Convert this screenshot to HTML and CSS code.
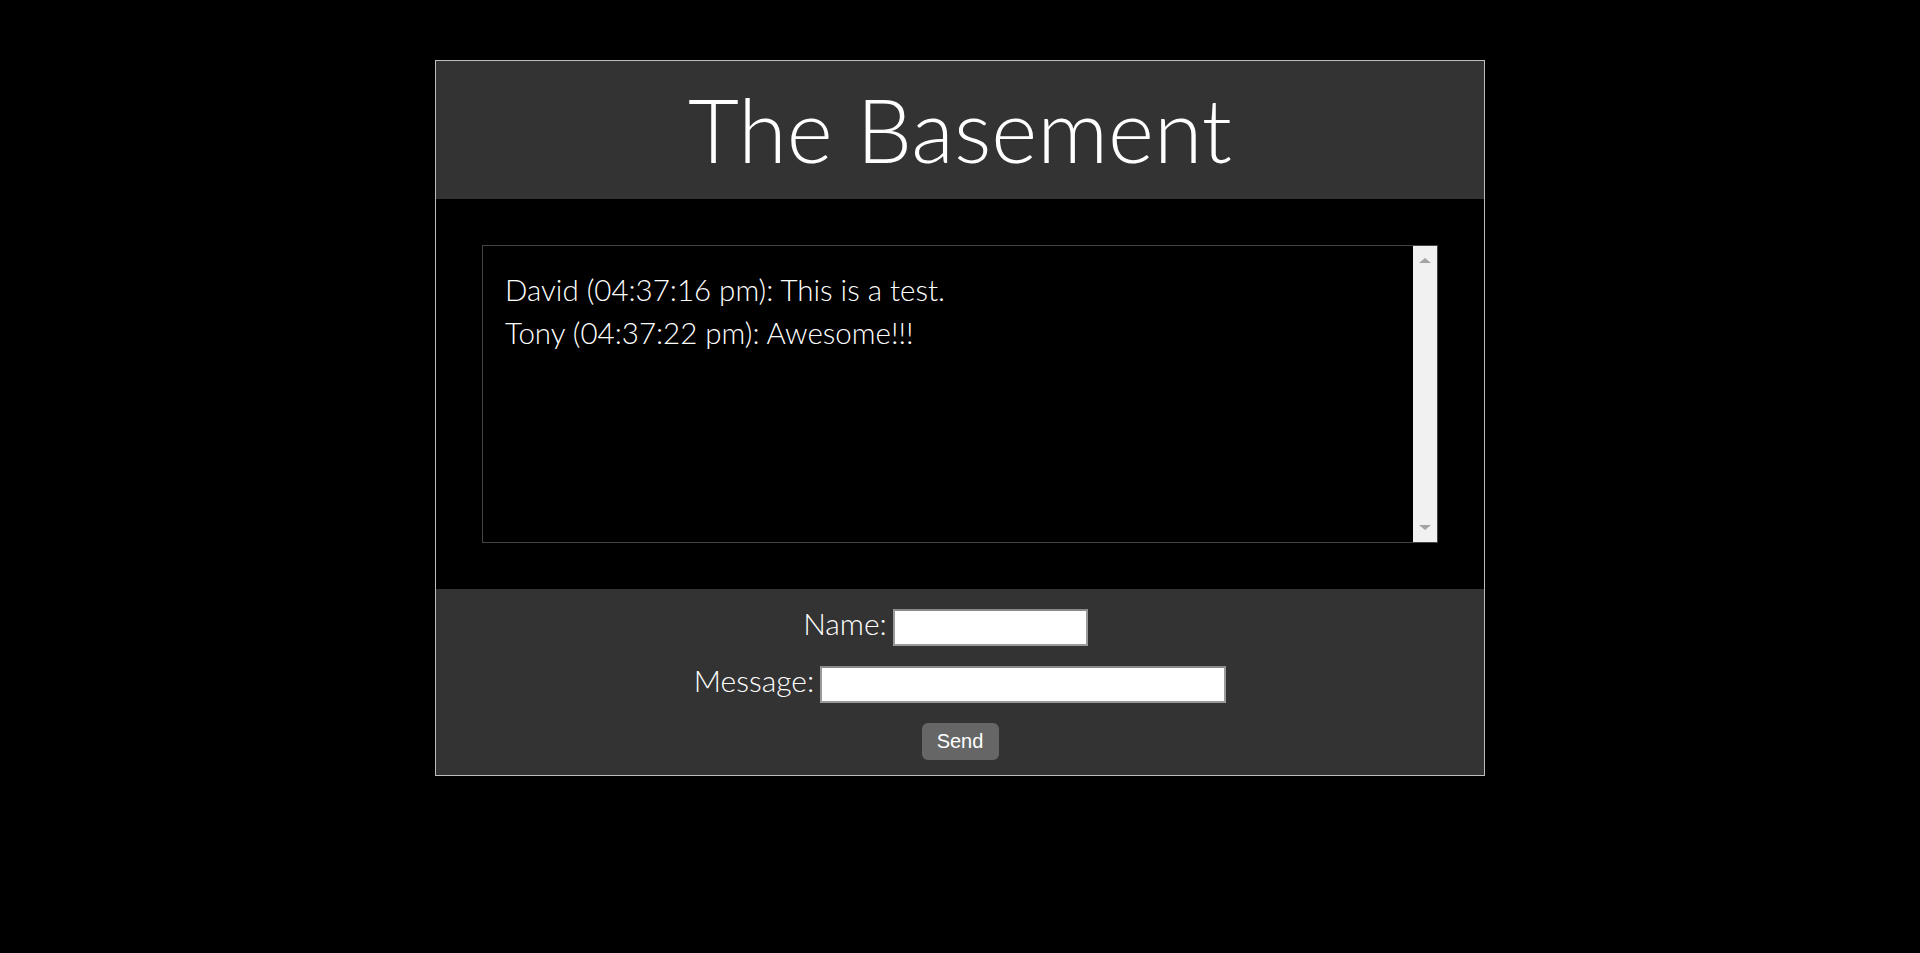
FILE: index.html
```html
<!DOCTYPE html>
<html lang="en">
<head>
    <meta charset="UTF-8">
    <meta name="viewport" content="width=device-width, initial-scale=1.0">
    <title>The Basement</title>
    <link rel="stylesheet" href="styles.css">
</head>
<body>
    <div id="wrapper">
        <div id="header">
            <h1>The Basement</h1>
        </div>

        <div id="chat">
            <div id="chatbox">
                <div id="log">
                    <div class="msg">David (04:37:16 pm): This is a test.</div>
                    <div class="msg">Tony (04:37:22 pm): Awesome!!!</div>
                </div>
                <div class="scrollbar">
                    <span class="arrow up"></span>
                    <span class="arrow down"></span>
                </div>
            </div>
        </div>

        <form id="sendForm">
            <div class="row name-row">
                <label for="name">Name:</label>
                <input type="text" id="name" class="name-input">
            </div>
            <div class="row">
                <label for="message">Message:</label>
                <input type="text" id="message" class="message-input">
            </div>
            <div class="row">
                <button type="submit" class="send-btn">Send</button>
            </div>
        </form>
    </div>
</body>
</html>
```

FILE: styles.css
```css
body {
    margin: 0;
    padding-top: 60px;
    background-color: #000;
    font-family: Lato, "Open Sans", sans-serif;
    font-weight: 300;
    color: #fff;
}
#wrapper {
    width: 1048px;
    margin: 0 auto;
    border: 1px solid #bdbdbd;
}
#header {
    height: 138px;
    background-color: #333;
    display: flex;
    align-items: center;
    justify-content: center;
}
#header h1 {
    margin: 0;
    font-size: 88px;
    font-weight: 300;
    line-height: 1.2;
}
#chat {
    padding: 46px;
    background-color: #000;
}
#chatbox {
    height: 296px;
    border: 1px solid #444;
    display: flex;
}
#log {
    flex: 1;
    padding: 22px 22px;
    font-size: 29.5px;
    line-height: 43px;
    color: #fff;
}
.scrollbar {
    width: 24px;
    background-color: #f1f1f1;
    display: flex;
    flex-direction: column;
    justify-content: space-between;
    align-items: center;
    padding: 12px 0;
}
.arrow {
    width: 0;
    height: 0;
    border-left: 6px solid transparent;
    border-right: 6px solid transparent;
}
.arrow.up {
    border-bottom: 5px solid #a3a3a3;
}
.arrow.down {
    border-top: 5px solid #a3a3a3;
}
#sendForm {
    margin: 0;
    padding: 20px 0 15px;
    background-color: #333;
    display: flex;
    flex-direction: column;
    gap: 20px;
}
.row {
    display: flex;
    justify-content: center;
    align-items: center;
    gap: 6px;
    height: 37px;
    font-size: 30px;
}
.row label {
    line-height: 26px;
    margin-bottom: 10px;
}
.name-row {
    padding-right: 29px;
}
input {
    height: 37px;
    box-sizing: border-box;
    border: 2px solid #9a9a9a;
    border-top-color: #8a8a8a;
    background-color: #fff;
    padding: 0 4px;
    font-size: 18px;
}
.name-input {
    width: 195px;
}
.message-input {
    width: 406px;
}
.send-btn {
    width: 77px;
    height: 37px;
    border: none;
    border-radius: 6px;
    background-color: #666;
    color: #fff;
    font-family: "Liberation Sans", Arial, sans-serif;
    font-size: 20px;
    cursor: pointer;
}
```
